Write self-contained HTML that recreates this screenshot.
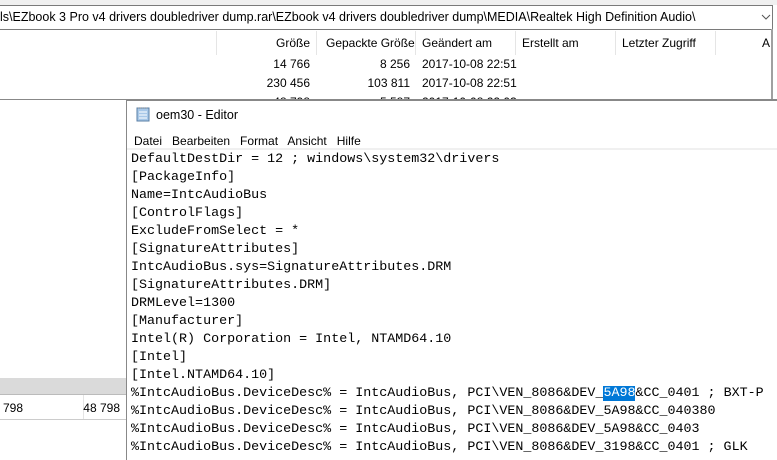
<!DOCTYPE html>
<html><head><meta charset="utf-8"><style>
*{margin:0;padding:0;box-sizing:border-box}
body{width:777px;height:451px;overflow:hidden;background:#fff;position:relative;font-family:"Liberation Sans",sans-serif;font-size:12px;color:#000}
.a{position:absolute;white-space:nowrap}
.mono{font-family:"Liberation Mono",monospace;font-size:13.35px;line-height:18px}
</style></head><body>
<div class="a" style="left:0;top:0;width:777px;height:5px;background:#f0f0f0"></div>
<div class="a" style="left:-2px;top:5px;width:775px;height:25px;border:1px solid #7a7a7a;background:#fff"></div>
<div class="a" style="left:0;top:10px;font-size:12.5px">ls\EZbook 3 Pro v4 drivers doubledriver dump.rar\EZbook v4 drivers doubledriver dump\MEDIA\Realtek High Definition Audio\</div>
<svg class="a" style="left:761px;top:14px" width="10" height="6"><path d="M1 1 L5 5 L9 1" stroke="#555" fill="none"/></svg>
<div class="a" style="left:771px;top:29px;width:2px;height:71px;background:#a0a0a0"></div>
<div class="a" style="left:216px;top:31px;width:1px;height:24px;background:#e5e5e5"></div>
<div class="a" style="left:316px;top:31px;width:1px;height:24px;background:#e5e5e5"></div>
<div class="a" style="left:415px;top:31px;width:1px;height:24px;background:#e5e5e5"></div>
<div class="a" style="left:515px;top:31px;width:1px;height:24px;background:#e5e5e5"></div>
<div class="a" style="left:615px;top:31px;width:1px;height:24px;background:#e5e5e5"></div>
<div class="a" style="left:715px;top:31px;width:1px;height:24px;background:#e5e5e5"></div>
<div class="a" style="left:0;top:36px;width:310px;text-align:right">Größe</div>
<div class="a" style="left:326px;top:36px">Gepackte Größe</div>
<div class="a" style="left:422px;top:36px">Geändert am</div>
<div class="a" style="left:522px;top:36px">Erstellt am</div>
<div class="a" style="left:622px;top:36px">Letzter Zugriff</div>
<div class="a" style="left:762px;top:36px">A</div>
<div class="a" style="left:0;top:57px;width:310px;text-align:right">14 766</div>
<div class="a" style="left:0;top:57px;width:410px;text-align:right">8 256</div>
<div class="a" style="left:422px;top:57px">2017-10-08 22:51</div>
<div class="a" style="left:0;top:76px;width:310px;text-align:right">230 456</div>
<div class="a" style="left:0;top:76px;width:410px;text-align:right">103 811</div>
<div class="a" style="left:422px;top:76px">2017-10-08 22:51</div>
<div class="a" style="left:0;top:95px;width:310px;text-align:right">48 798</div>
<div class="a" style="left:0;top:95px;width:410px;text-align:right">5 587</div>
<div class="a" style="left:422px;top:95px">2017-10-08 22:03</div>
<div class="a" style="left:0;top:99px;width:777px;height:1px;background:#888"></div>
<div class="a" style="left:0;top:100px;width:777px;height:20px;background:#fff"></div>
<div class="a" style="left:0;top:378px;width:126px;height:16px;background:#dadada"></div>
<div class="a" style="left:0;top:394px;width:126px;height:1px;background:#bbb"></div>
<div class="a" style="left:83px;top:395px;width:1px;height:24px;background:#e5e5e5"></div>
<div class="a" style="left:0;top:419px;width:126px;height:1px;background:#ccc"></div>
<div class="a" style="left:3px;top:401px">798</div>
<div class="a" style="left:0;top:401px;width:120px;text-align:right">48 798</div>
<!-- editor -->
<div class="a" style="left:126px;top:100px;width:660px;height:360px;background:#fff;border-left:1px solid #888;border-top:1px solid #888"></div>
<svg class="a" style="left:136px;top:106px" width="14" height="16"><rect x="1" y="2" width="12" height="13" fill="#a8c8e8" stroke="#5a7fa6"/><path d="M3 6H11M3 9H11M3 12H11" stroke="#fff"/><path d="M2 2h10" stroke="#888" stroke-dasharray="1 1"/></svg>
<div class="a" style="left:156px;top:108px;font-size:12.5px">oem30 - Editor</div>
<div class="a" style="left:134px;top:134px">Datei&nbsp;&nbsp; Bearbeiten&nbsp;&nbsp; Format&nbsp;&nbsp; Ansicht&nbsp;&nbsp; Hilfe</div>
<div class="a" style="left:127px;top:148px;width:660px;height:2px;background:#f0f0f0"></div>
<div class="a mono" style="left:131px;top:151px">DefaultDestDir = 12 ; windows\system32\drivers<br>[PackageInfo]<br>Name=IntcAudioBus<br>[ControlFlags]<br>ExcludeFromSelect = *<br>[SignatureAttributes]<br>IntcAudioBus.sys=SignatureAttributes.DRM<br>[SignatureAttributes.DRM]<br>DRMLevel=1300<br>[Manufacturer]<br>Intel(R) Corporation = Intel, NTAMD64.10<br>[Intel]<br>[Intel.NTAMD64.10]<br>%IntcAudioBus.DeviceDesc% = IntcAudioBus, PCI\VEN_8086&amp;DEV_<span style="color:#fff;background:#0078d7">5A98</span>&amp;CC_0401 ; BXT-P<br>%IntcAudioBus.DeviceDesc% = IntcAudioBus, PCI\VEN_8086&amp;DEV_5A98&amp;CC_040380<br>%IntcAudioBus.DeviceDesc% = IntcAudioBus, PCI\VEN_8086&amp;DEV_5A98&amp;CC_0403<br>%IntcAudioBus.DeviceDesc% = IntcAudioBus, PCI\VEN_8086&amp;DEV_3198&amp;CC_0401 ; GLK</div>
</body></html>
